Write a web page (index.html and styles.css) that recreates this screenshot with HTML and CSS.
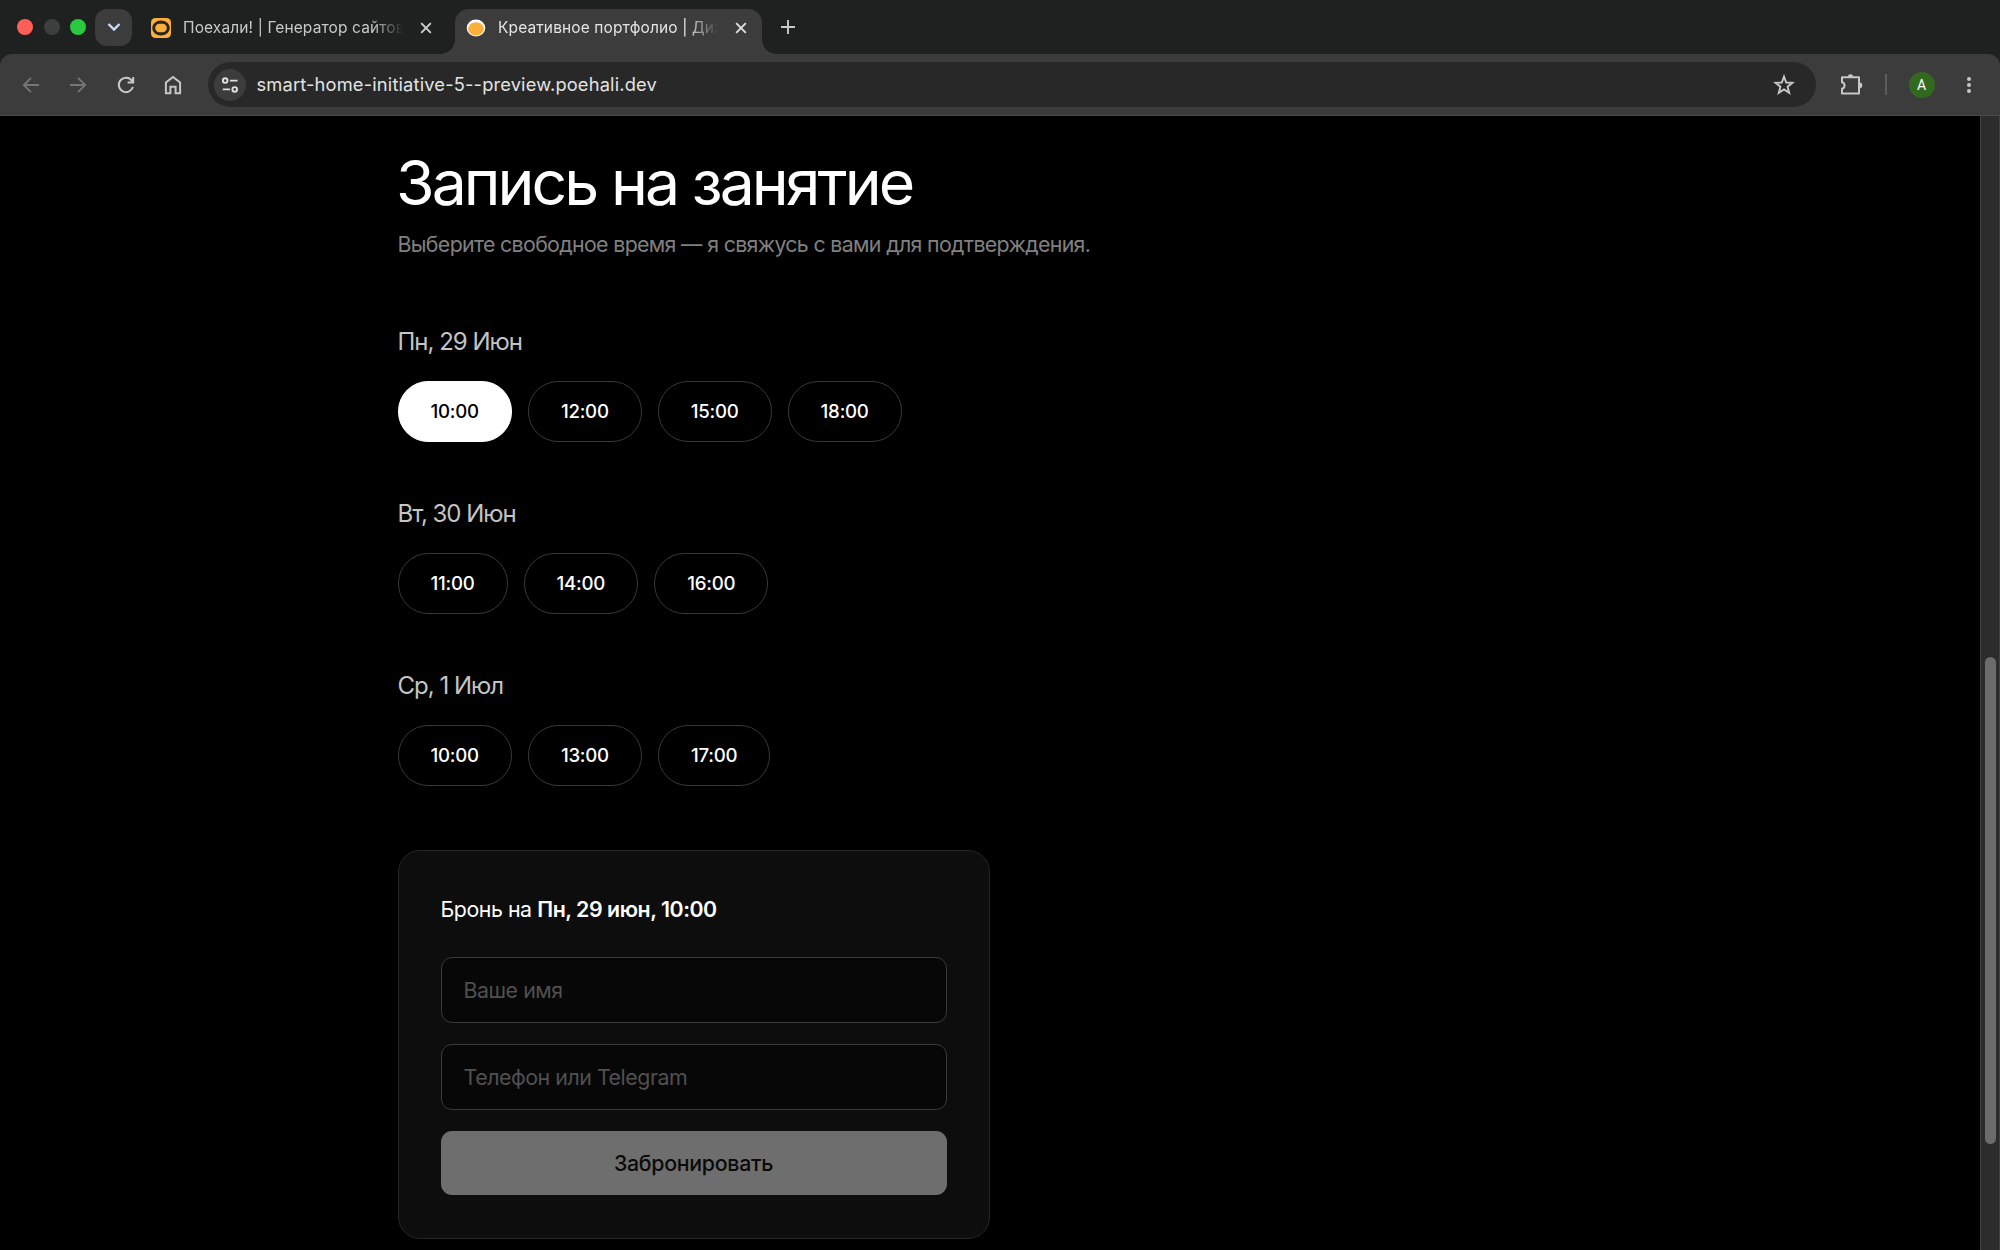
FILE: index.html
```
<!DOCTYPE html>
<html lang="ru">
<head>
    <meta charset="UTF-8">
    <title>Креативное портфолио | Дизайнер</title>
    <link rel="stylesheet" href="styles.css">
</head>
<body>
    <div class="browser">
        <div class="tabs">
            <div class="lights">
                <span class="light red"></span>
                <span class="light grey"></span>
                <span class="light green"></span>
            </div>
            <button class="tab-search">
                <svg width="14" height="10" viewBox="0 0 14 10"><path d="M1.5 2 L7 7.5 L12.5 2" fill="none" stroke="#c9dcfb" stroke-width="2.4"/></svg>
            </button>
            <div class="tab">
                <svg class="favicon" width="20" height="20" viewBox="0 0 20 20">
                    <rect width="20" height="20" rx="4.5" fill="#fdaf3c"/>
                    <ellipse cx="10" cy="10" rx="8.8" ry="7.4" fill="#2a241b"/>
                    <rect x="4.2" y="5.8" width="11.6" height="8.4" rx="4.2" fill="#fdaf3c"/>
                </svg>
                <span class="tab-title">Поехали! | Генератор сайтов</span>
                <svg class="close" width="12" height="12" viewBox="0 0 12 12"><path d="M1.2 1.2 L10.8 10.8 M10.8 1.2 L1.2 10.8" stroke="#d0d0d0" stroke-width="1.9"/></svg>
            </div>
            <div class="tab active">
                <svg class="favicon" width="20" height="20" viewBox="0 0 20 20">
                    <ellipse cx="10" cy="10" rx="9.3" ry="8.5" fill="#fff"/>
                    <ellipse cx="10" cy="10.8" rx="7.9" ry="6.6" fill="#fdaf3c"/>
                </svg>
                <span class="tab-title">Креативное портфолио | Диз</span>
                <svg class="close" width="12" height="12" viewBox="0 0 12 12"><path d="M1.2 1.2 L10.8 10.8 M10.8 1.2 L1.2 10.8" stroke="#e0e0e0" stroke-width="1.9"/></svg>
            </div>
            <svg class="new-tab" width="14" height="14" viewBox="0 0 14 14"><path d="M7 0 V14 M0 7 H14" stroke="#c8c8c8" stroke-width="1.9"/></svg>
        </div>
        <div class="toolbar">
            <div class="nav">
                <svg width="18" height="18" viewBox="0 0 18 18"><path d="M17 9 H2 M9 1.8 L1.8 9 L9 16.2" fill="none" stroke="#767676" stroke-width="1.8"/></svg>
                <svg width="18" height="18" viewBox="0 0 18 18"><path d="M1 9 H16 M9 1.8 L16.2 9 L9 16.2" fill="none" stroke="#767676" stroke-width="1.8"/></svg>
                <svg width="18" height="18" viewBox="0 0 18 18"><path d="M15.9 11 A7.2 7.2 0 1 1 15 4.9 L16 6.4 M16.2 1 V6.6 H10.6" fill="none" stroke="#c7c7c7" stroke-width="2"/></svg>
                <svg width="18" height="20" viewBox="0 0 18 20"><path d="M1.9 18.2 V7.4 L9 1.9 L16.1 7.4 V18.2 H11.6 V11.8 H6.4 V18.2 Z" fill="none" stroke="#c7c7c7" stroke-width="2"/></svg>
            </div>
            <div class="address">
                <span class="site-info">
                    <svg width="18" height="16" viewBox="0 0 18 16" fill="none" stroke="#e0e0e0" stroke-width="1.9"><circle cx="4.2" cy="3.6" r="2.3"/><path d="M9 3.6 H16.5 M1.8 12.4 H9"/><circle cx="13.7" cy="12.4" r="2.3"/></svg>
                </span>
                <span class="url">smart-home-initiative-5--preview.poehali.dev</span>
                <svg class="star" width="22" height="22" viewBox="0 0 22 22"><path d="M11 2.6 L13.2 8.5 L19.4 8.8 L14.6 12.7 L16.2 18.8 L11 15.4 L5.8 18.8 L7.4 12.7 L2.6 8.8 L8.8 8.5 Z" fill="none" stroke="#c7c7c7" stroke-width="1.9"/></svg>
            </div>
            <svg class="puzzle" width="24" height="24" viewBox="0 0 24 24">
                <path d="M2 4.3 H19 V20.5 H2 V15.8 A3.4 3.4 0 0 0 2 9.2 Z" fill="none" stroke="#c7c7c7" stroke-width="2" stroke-linejoin="round"/>
                <path d="M7.8 4 A2.7 2.7 0 0 1 13.2 4 Z M19.5 9.6 A2.8 2.8 0 0 1 19.5 15.2 Z" fill="#c7c7c7"/>
            </svg>
            <span class="divider"></span>
            <span class="avatar">A</span>
            <svg class="dots" width="6" height="18" viewBox="0 0 6 18" fill="#c7c7c7"><circle cx="3" cy="3" r="2"/><circle cx="3" cy="9" r="2"/><circle cx="3" cy="15" r="2"/></svg>
        </div>
    </div>
    <div class="view">
        <main class="booking">
            <h1>Запись на занятие</h1>
            <p class="lead">Выберите свободное время — я свяжусь с вами для подтверждения.</p>
            <section class="day">
                <h2>Пн, 29 Июн</h2>
                <div class="slots">
                    <button class="slot selected">10:00</button>
                    <button class="slot">12:00</button>
                    <button class="slot">15:00</button>
                    <button class="slot">18:00</button>
                </div>
            </section>
            <section class="day">
                <h2>Вт, 30 Июн</h2>
                <div class="slots">
                    <button class="slot">11:00</button>
                    <button class="slot">14:00</button>
                    <button class="slot">16:00</button>
                </div>
            </section>
            <section class="day">
                <h2>Ср, 1 Июл</h2>
                <div class="slots">
                    <button class="slot">10:00</button>
                    <button class="slot">13:00</button>
                    <button class="slot">17:00</button>
                </div>
            </section>
            <form class="card">
                <p class="summary">Бронь на <b>Пн, 29 июн, 10:00</b></p>
                <input type="text" placeholder="Ваше имя">
                <input type="text" placeholder="Телефон или Telegram">
                <button class="submit" type="button">Забронировать</button>
            </form>
        </main>
        <div class="scrollbar"><div class="thumb"></div></div>
    </div>
</body>
</html>
```
FILE: styles.css
```
* {
    box-sizing: border-box;
}
body {
    margin: 0;
    height: 1250px;
    overflow: hidden;
    display: flex;
    flex-direction: column;
    background: #000;
    color: #fff;
    font-family: Inter, "Liberation Sans", sans-serif;
}
button, input {
    font-family: inherit;
}
svg {
    display: block;
    flex: none;
}

/* browser frame */
.browser {
    flex: none;
    background: #1f2120;
}
.tabs {
    height: 54px;
    display: flex;
    align-items: center;
    padding-left: 17px;
}
.lights {
    display: flex;
    gap: 10.5px;
}
.light {
    width: 16px;
    height: 16px;
    border-radius: 50%;
}
.red { background: #ff5f57; }
.grey { background: #3d3f3e; }
.green { background: #28c840; }
.tab-search {
    width: 37px;
    height: 37px;
    margin-left: 9px;
    padding: 0;
    border: none;
    border-radius: 12px;
    background: #3c3c3c;
    display: flex;
    align-items: center;
    justify-content: center;
}
.tab {
    width: 308px;
    height: 45px;
    display: flex;
    align-items: center;
    align-self: flex-end;
    padding: 0 15px 7px 12px;
    margin-left: 7px;
    color: #c8c8c8;
}
.tab.active {
    position: relative;
    width: 307px;
    margin-left: 8px;
    padding-left: 11px;
    background: #3c3c3c;
    border-radius: 14px 14px 0 0;
    color: #e3e3e3;
}
/* flared bottom corners of the open tab */
.tab.active::before,
.tab.active::after {
    content: "";
    position: absolute;
    bottom: 0;
    width: 14px;
    height: 14px;
}
.tab.active::before {
    left: -14px;
    background: radial-gradient(circle at 0 0, transparent 13.5px, #3c3c3c 14px);
}
.tab.active::after {
    right: -14px;
    background: radial-gradient(circle at 100% 0, transparent 13.5px, #3c3c3c 14px);
}
.tab-title {
    flex: 1;
    margin: 0 12px 0 12px;
    white-space: nowrap;
    font-size: 15.5px;
    line-height: 20px;
    letter-spacing: 0.12px;
    -webkit-mask-image: linear-gradient(to right, #000 84%, transparent 98%);
    mask-image: linear-gradient(to right, #000 84%, transparent 98%);
}
.new-tab {
    margin-left: 19px;
}
.toolbar {
    height: 62px;
    display: flex;
    align-items: center;
    padding: 0 28px 0 21.5px;
    background: #3c3c3c;
    border-bottom: 1px solid #4a4a4a;
    border-radius: 12px 12px 0 0;
}
.nav {
    display: flex;
    align-items: center;
    gap: 29.5px;
}
.address {
    width: 1608px;
    height: 45px;
    margin-left: 25.5px;
    padding: 0 21px 0 6px;
    display: flex;
    align-items: center;
    border-radius: 23px;
    background: #282828;
}
.site-info {
    width: 32px;
    height: 32px;
    border-radius: 50%;
    background: #3c3c3c;
    display: flex;
    align-items: center;
    justify-content: center;
}
.url {
    flex: 1;
    margin-left: 11px;
    padding-bottom: 2px;
    font-size: 18.3px;
    letter-spacing: 0.16px;
    color: #e3e3e3;
}
.puzzle {
    margin-left: 24px;
}
.divider {
    width: 2px;
    height: 21px;
    margin-left: 21px;
    background: #5c5c5c;
}
.avatar {
    width: 26px;
    height: 26px;
    margin-left: 22px;
    border-radius: 50%;
    background: #33691e;
    font: 14px/26px Roboto, sans-serif;
    text-align: center;
}
.dots {
    margin-left: auto;
}

/* page */
.view {
    flex: 1;
    min-height: 0;
    display: flex;
    justify-content: space-between;
}
.booking {
    padding: 34px 0 0 397.5px;
}
h1 {
    margin: 0 0 0 -1.5px;
    font-size: 62.5px;
    line-height: 64px;
    font-weight: 400;
    letter-spacing: -2.95px;
}
.lead {
    margin: 14px 0 63px;
    font-size: 21.33px;
    line-height: 32px;
    letter-spacing: -0.65px;
    color: #808080;
}
.day {
    height: 172px;
}
h2 {
    margin: 0 0 21px;
    font-size: 24px;
    line-height: 37px;
    font-weight: 400;
    letter-spacing: -1px;
    color: #c4c4c4;
}
.slots {
    display: flex;
    gap: 16px;
}
.slot {
    height: 61px;
    padding: 0 32px;
    border: 1.33px solid #383838;
    border-radius: 30px;
    background: none;
    color: #fff;
    font-size: 18.67px;
    font-weight: 500;
    letter-spacing: -0.23px;
}
.slot.selected {
    background: #fff;
    border-color: #fff;
    color: #000;
}
.card {
    width: 592px;
    height: 389px;
    margin-top: 11px;
    padding: 42px;
    display: flex;
    flex-direction: column;
    gap: 21px;
    border: 1px solid #262626;
    border-radius: 22px;
    background: #0d0d0d;
}
.summary {
    margin: 0 0 11px;
    font-size: 21.33px;
    line-height: 32px;
    letter-spacing: -0.45px;
}
.summary b {
    font-weight: 600;
}
.card input {
    height: 66px;
    padding: 0 22px;
    border: 1px solid #3a3a3a;
    border-radius: 11px;
    background: #070707;
    font-size: 21.33px;
    letter-spacing: -0.45px;
}
.card input::placeholder {
    color: #505050;
}
.submit {
    height: 64px;
    border: none;
    border-radius: 11px;
    background: #6e6e6e;
    color: #0a0a0a;
    font-size: 21.33px;
    font-weight: 500;
    letter-spacing: -0.3px;
}
.scrollbar {
    width: 20px;
    padding: 541px 0 0 4px;
    border-left: 1px solid #424242;
    border-right: 1px solid #424242;
    background: #2c2c2c;
}
.thumb {
    width: 11px;
    height: 487px;
    border-radius: 6px;
    background: #6b6b6b;
}
```
